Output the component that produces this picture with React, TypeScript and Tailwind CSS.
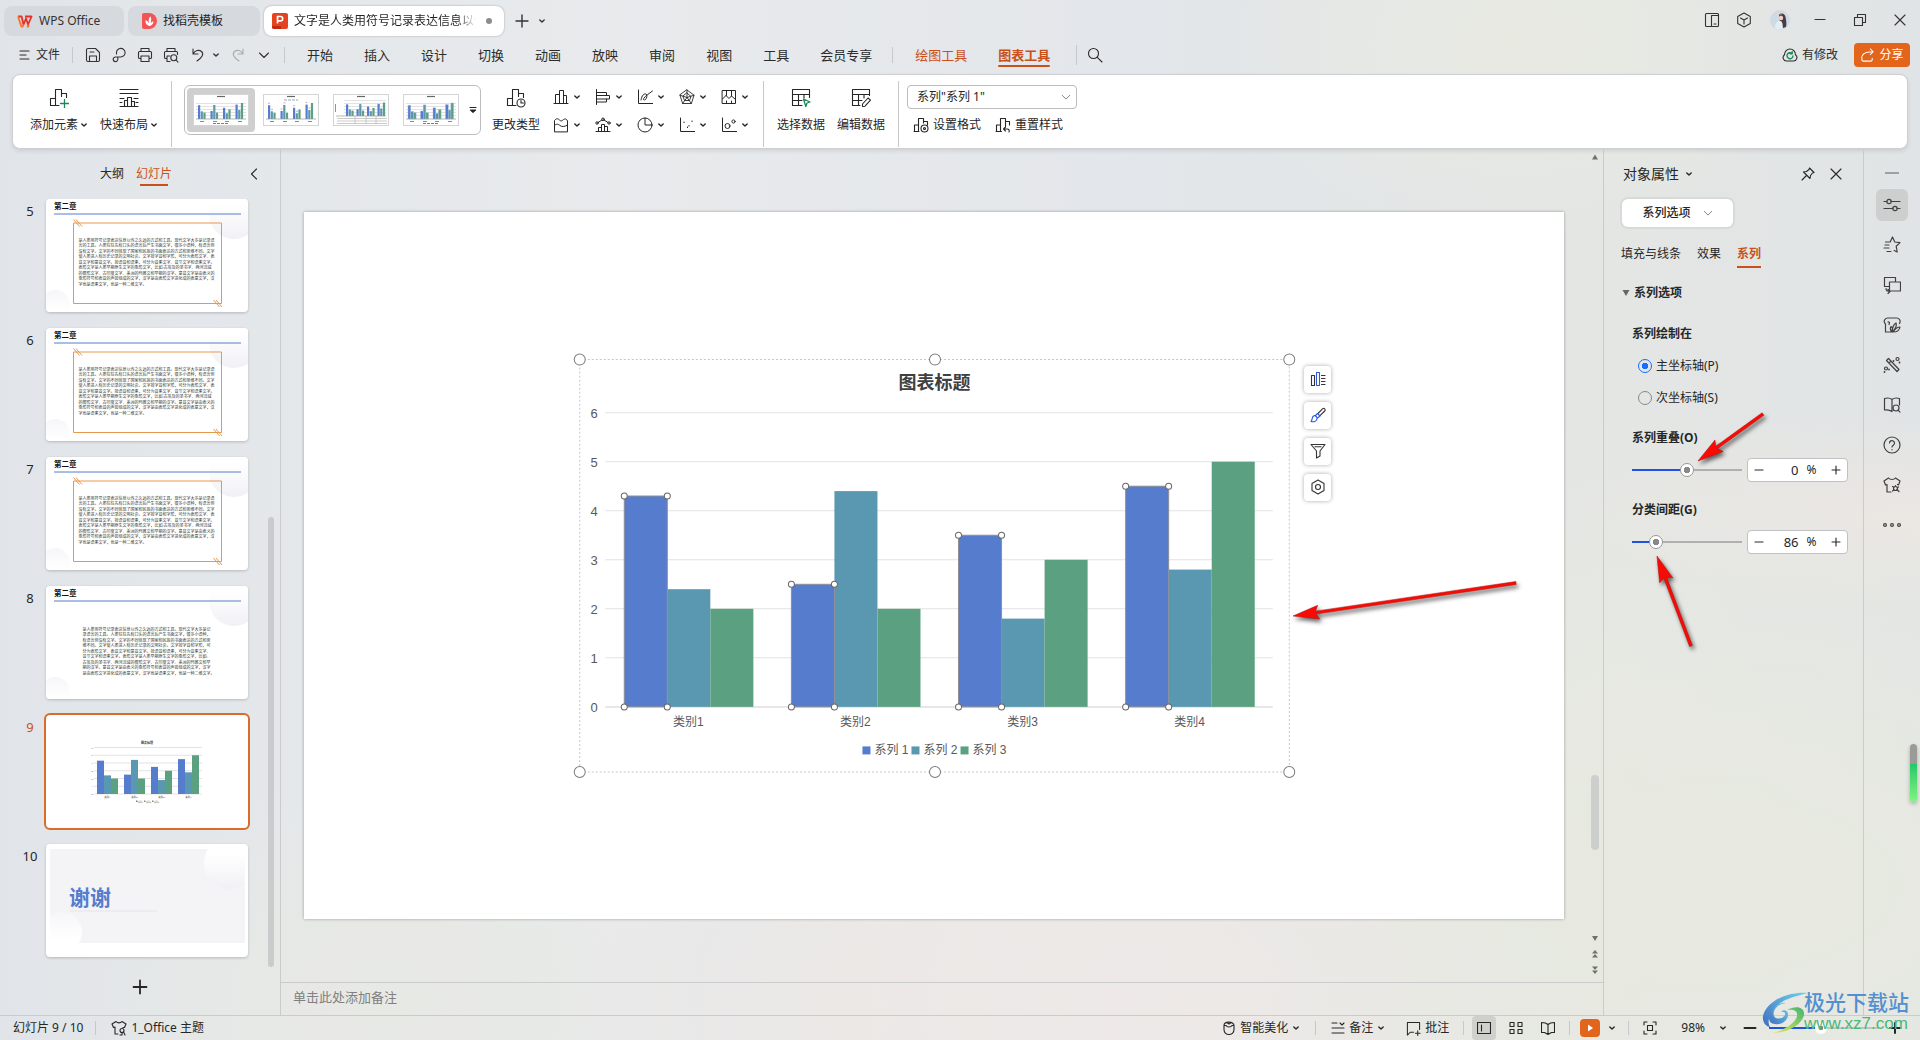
import React, { useState } from "react";

type IconProps = { size?: number; className?: string; children: React.ReactNode; sw?: number; box?: number };

function Icon({ size = 16, box, className = "", sw = 1.1, children }: IconProps) {
  const b = box ?? size;
  return (
    <svg width={size} height={size} viewBox={`0 0 ${b} ${b}`} fill="none" stroke="currentColor" strokeWidth={sw} strokeLinecap="round" strokeLinejoin="round" className={`shrink-0 ${className}`} aria-hidden="true">
      {children}
    </svg>
  );
}

const Caret = () => (
  <Icon size={8} sw={1.4}><path d="M1.800 3 4 5.100 6.200 3" /></Icon>
);

const Vee = ({ size = 12 }: { size?: number }) => (
  <Icon size={size} box={12} sw={1.1}><path d="M1.5 4 6 8.5 10.5 4" /></Icon>
);

const Divider = ({ className = "" }: { className?: string }) => <span className={`w-px shrink-0 bg-[#c6c8cb] ${className}`} />;

/* ---------- title bar ---------- */

function TitleBar() {
  return (
    <header className="flex h-10 shrink-0 items-start pt-1.5 pl-1">
      <button className="flex h-[30px] w-[120px] items-center gap-1.5 rounded-lg bg-[#d6d9dd] pl-[13px] text-xs text-[#333]">
        <svg width="16" height="13" viewBox="0 0 16 13" fill="none" stroke="#e8302a" strokeWidth="1.800" strokeLinejoin="round" aria-hidden="true">
          <path d="M1 1.500h3.600L6.500 9.500 9 3.500l2 6 3.600-8H8" />
          <path d="M1 1.500 4.400 11.500h1.400l.9-2M9.800 11.500h1.500l.5-1.500" stroke="#f5732b" />
        </svg>
        WPS Office
      </button>
      <button className="ml-1 flex h-[30px] w-[132px] items-center gap-1.5 rounded-lg bg-[#d6d9dd] pl-[13px] text-xs text-[#222]">
        <svg width="16" height="16" viewBox="0 0 16 16" aria-hidden="true">
          <path d="M1 2a2 2 0 0 1 2-2h5a7.500 7.500 0 0 1 0 16H3a2 2 0 0 1-2-2z" fill="#f25555" />
          <path d="M8.300 13C5 12 4.200 9.500 4.600 7.300 6.400 8 7.400 9 8 10.500 7.200 7.500 8 5 9.300 3.300c1.200 2 1.200 4.500.2 6.900.9-1 1.700-1.600 2.900-2C12.500 10.500 11 12.600 8.300 13z" fill="#fff" />
        </svg>
        找稻壳模板
      </button>
      <div className="ml-1 flex h-[30px] w-60 items-center rounded-lg bg-white pl-2 shadow-[0_0_2px_#9a9a9a]">
        <svg width="16" height="16" viewBox="0 0 16 16" aria-hidden="true">
          <rect width="16" height="16" rx="2" fill="#e5431f" />
          <path d="M0 13h9v3H2a2 2 0 0 1-2-2z" fill="#c42a12" />
          <path d="M5.500 10.500V3.500h3a2.200 2.200 0 0 1 0 4.400h-3" fill="none" stroke="#fff" strokeWidth="1.600" />
        </svg>
        <button className="ml-1.5 w-48 shrink-0 bg-gradient-to-r from-[#222] from-85% to-transparent to-95% bg-clip-text text-left text-xs whitespace-nowrap text-transparent">
          文字是人类用符号记录表达信息以传
        </button>
        <span className="size-1.5 rounded-full bg-[#8c8c8c]" />
      </div>
      <button aria-label="新建标签" className="ml-2.5 flex h-[30px] w-4 items-center justify-center text-[#333]">
        <Icon size={14} sw={1.400}><path d="M7 1v12M1 7h12" /></Icon>
      </button>
      <button aria-label="标签列表" className="ml-2 flex h-[30px] w-2 items-center justify-center text-[#333]"><Caret /></button>

      <div className="ml-auto flex h-[28px] items-center text-[#333]">
        <button aria-label="侧栏" className="flex w-8 justify-center">
          <Icon size={16}><rect x="1.500" y="1.500" width="13" height="13" rx="1" /><path d="M7.500 14.500v-11h7M10 12h2" /></Icon>
        </button>
        <button aria-label="应用" className="flex w-8 justify-center">
          <Icon size={16}><path d="M8 1 14.300 4.500v7L8 15 1.700 11.500v-7zM4.500 6 8 8l3.500-2M8 8v4" /></Icon>
        </button>
        <button aria-label="账号" className="flex w-10 justify-center">
          <svg width="20" height="20" viewBox="0 0 20 20" aria-hidden="true">
            <circle cx="10" cy="10" r="10" fill="#cfdae2" />
            <path d="M9 5c2-2.500 6-1.500 6.500 2 .5 3 1.500 6 .5 10l-3 1-3-6z" fill="#4a3a45" />
            <circle cx="11" cy="8" r="2.200" fill="#f0d3c8" />
            <path d="M5 18c0-5 2.500-7.500 5.500-7 2 .5 2.500 4 2 8a9 9 0 0 1-7.500-1z" fill="#e3eef4" />
            <path d="M9.500 5 12 4.500" stroke="#c0705a" />
          </svg>
        </button>
        <button aria-label="最小化" className="flex w-10 justify-center"><Icon size={12}><path d="M1 5.500h10" /></Icon></button>
        <button aria-label="还原" className="flex w-10 justify-center">
          <Icon size={14}><path d="M1.500 4.500h8v8h-8zM4.500 4.500v-3h8v8h-3" /></Icon>
        </button>
        <button aria-label="关闭" className="flex w-10 justify-center"><Icon size={12}><path d="M1 1l10 10M11 1 1 11" /></Icon></button>
      </div>
    </header>
  );
}

/* ---------- menu row ---------- */

const menuTabs = ["开始", "插入", "设计", "切换", "动画", "放映", "审阅", "视图", "工具", "会员专享"];

function MenuRow() {
  return (
    <div className="flex h-[34px] shrink-0 items-center pr-[10px] pb-1 pl-[18px] text-[#2b2b2b]">
      <button className="flex items-center gap-1.5 text-xs">
        <Icon size={12}><path d="M2 2h9M2 6h6M2 10h9" /></Icon>文件
      </button>
      <Divider className="ml-3 h-4" />
      <div className="ml-[7px] flex items-center text-[#333]">
        <button aria-label="保存" className="flex w-[26px] justify-center">
          <Icon><path d="M1.500 3a1.500 1.500 0 0 1 1.500-1.500h7.500l4 4V13a1.500 1.500 0 0 1-1.500 1.500H3A1.500 1.500 0 0 1 1.500 13zM4.500 14v-5h7v5M5 5h4" /></Icon>
        </button>
        <button aria-label="输出" className="flex w-[26px] justify-center">
          <Icon><path d="M5.500 7V5.800A4.300 4.300 0 1 1 9.800 10H4.500A2.300 2.300 0 1 0 6.800 12.300V10" /></Icon>
        </button>
        <button aria-label="打印" className="flex w-[26px] justify-center">
          <Icon><path d="M4 4.500v-3h8v3M4 11.500H2.500a1 1 0 0 1-1-1v-5a1 1 0 0 1 1-1h11a1 1 0 0 1 1 1v5a1 1 0 0 1-1 1H12M4 9h8v5.500H4z" /></Icon>
        </button>
        <button aria-label="打印预览" className="flex w-[26px] justify-center">
          <Icon><path d="M4 4.500v-3h8v3M3.500 11.500h-1a1 1 0 0 1-1-1v-5a1 1 0 0 1 1-1h11a1 1 0 0 1 1 1v2M4 14.500V9h3M4 14.500h3" /><circle cx="10.800" cy="10.800" r="3" /><path d="m13 13 2 2.200" /></Icon>
        </button>
        <button aria-label="撤销" className="flex w-[28px] justify-center">
          <Icon><path d="M3 2v5h5M3.200 6.800C5 3.500 9 2.300 11.500 4.500c2.600 2.500 1 5.500-4.500 9.500" /></Icon>
        </button>
        <button aria-label="撤销列表" className="flex w-2 justify-center"><Caret /></button>
        <button aria-label="恢复" className="flex w-9 justify-center text-[#a9abae]">
          <Icon><path d="M13 2v5H8M12.800 6.800C11 3.500 7 2.300 4.500 4.500c-2.600 2.500-1 5.500 4.500 9.500" /></Icon>
        </button>
        <button aria-label="更多" className="flex w-4 justify-center"><Vee size={12} /></button>
      </div>
      <Divider className="ml-3 h-4" />
      <nav className="ml-[22px] flex items-center gap-[31px] text-[13px] whitespace-nowrap">
        {menuTabs.map((t) => <button key={t}>{t}</button>)}
      </nav>
      <Divider className="ml-5 h-4" />
      <nav className="ml-[22px] flex items-center gap-[31px] text-[13px] whitespace-nowrap text-[#c9501a]">
        <button>绘图工具</button>
        <button className="relative font-bold">
          图表工具<span className="absolute inset-x-0 -bottom-1 h-0.5 rounded bg-[#c9501a]" />
        </button>
      </nav>
      <Divider className="ml-[26px] h-5" />
      <button aria-label="搜索" className="ml-2.5"><Icon><circle cx="6.500" cy="6.500" r="5" /><path d="M10.300 10.300 15 15" /></Icon></button>
      <button className="ml-auto flex items-center gap-1 text-xs">
        <Icon size={16}>
          <path d="M4.500 14a3.500 3.500 0 0 1-2-6.300C2.600 4.500 5 2 8 2s5.400 2.500 5.500 5.700a3.500 3.500 0 0 1-2 6.300z" />
          <path d="M10 6.500A3 3 0 1 0 11 9M10.200 4.800v2H8.200" stroke="#1a8a5a" strokeWidth="1.400" />
        </Icon>
        有修改
      </button>
      <button className="ml-4 flex h-6 w-14 items-center justify-center gap-1 rounded bg-[#e3651b] text-xs text-white">
        <Icon size={15} box={16}><path d="M2 9v3.500A1.500 1.500 0 0 0 3.500 14h8a1.500 1.500 0 0 0 1.500-1.500V11M2.500 8C4 5 8 4 14 4M11 1l3 3-3 3" /></Icon>
        分享
      </button>
    </div>
  );
}

/* ---------- ribbon ---------- */

const chartData = [
  [4.3, 2.4, 2],
  [2.5, 4.4, 2],
  [3.5, 1.8, 3],
  [4.5, 2.8, 5],
];
const seriesColors = ["#567ccd", "#5998b0", "#5ba181"];

function StyleThumb({ variant }: { variant: number }) {
  const base = variant === 2 ? 22 : 25;
  const left = variant === 2 ? 12 : 4;
  const unit = variant === 2 ? 2.7 : 3.2;
  const pitch = variant === 2 ? 10.5 : 12.5;
  return (
    <svg width="56" height="32" viewBox="0 0 56 32" aria-hidden="true">
      <rect x="0.500" y="0.500" width="55" height="31" fill="#fff" stroke="#d5d5d5" />
      <path d="M24 2.500h8" stroke="#666" strokeWidth="1.200" />
      {variant !== 1 && [0, 1, 2, 3, 4].map((i) => <path key={i} d={`M${left - 1} ${base - 3 * i - 3.500}H53`} stroke="#e2e2e2" />)}
      {variant === 1 && <path d="M21 6h14" stroke="#9aa6b8" strokeDasharray="3 1" />}
      {variant === 2 && <path d="M4 24.500H54M4 27H54M4 29.500H54M22 22v8M33 22v8M43 22v8" stroke="#bdbdbd" strokeWidth="0.800" />}
      {variant === 2 && <path d="M2.500 10v8" stroke="#b08a6a" />}
      {chartData.map((g, i) =>
        g.map((v, j) => (
          <rect key={`${i}-${j}`} x={left + 1 + i * pitch + j * 2.7} y={base - v * unit} width={variant === 3 ? 2.7 : 2.2} height={v * unit} fill={seriesColors[j]} stroke={variant === 3 ? "#a9bfe0" : "none"} strokeWidth="0.400" />
        )),
      )}
      {variant === 1 && chartData.map((g, i) => <path key={i} d={`M${5 + i * 12.5} ${base - g[0] * unit - 2}h2M${8 + i * 12.5} ${base - g[1] * unit - 2}h2`} stroke="#e3a5a0" />)}
      <path d={`M3 ${base}H53`} stroke="#9a9a9a" strokeWidth="0.700" />
      {variant !== 2 && <path d="M7 27.500h4M20 27.500h4M32 27.500h4M45 27.500h4" stroke="#a08080" />}
      {(variant === 0 || variant === 3) && <path d="M20 29.500h16" stroke="#6a7fa8" strokeDasharray="3 1" />}
    </svg>
  );
}

const chartTypes: { name: string; art: React.ReactNode }[] = [
  { name: "柱形图", art: <path d="M1 14.500h14M2.500 14.500v-9h4v9M6.500 14.500V1.500h4v13M10.500 6.500h3v8" /> },
  { name: "条形图", art: <path d="M1.500 .5v15M1.500 3.500h10v3M1.500 6.500h13v3.500h-13M1.500 13h10v-3" /> },
  { name: "折线图", art: <path d="M1.500 1v13.500H16M4 11c1-5 3-6.500 5-6 1.500.5 1 4-.5 5.500-1 1-3 .5-1.500-1.500C9 6.500 11.500 5 15.500 2" /> },
  { name: "雷达图", art: <path d="M8 1 15 6.200 12.400 14.500H3.600L1 6.200zM8 1v7.500M1 6.200l7 2.300 7-2.300M3.600 14.500 8 8.500l4.400 6M8 4l4 3.500-1.500 4h-5L4 7.500z" strokeWidth="0.900" /> },
  { name: "地图", art: <path d="M1.500 1.500h13v13h-13zM1.500 10 5 6.500l3 3 2.500-2.500 4 3.500M5.500 1.500v5M10.500 1.500V7M5.500 12v2.500M10.500 12v2.500" /> },
  { name: "面积图", art: <path d="M1.500 14.500v-11C4 .5 5.500 2 7 3.500c2 1.500 3.500-2 5.500-1.500l2 1.500v11zM1.500 8.500c2-2 3.500-1.500 5.500 0s4 1.500 7.500-.5" /> },
  { name: "组合图", art: <><path d="M1 14.500h14M3.500 14.500v-4h3v4M6.500 14.500V7.500h3v7M9.500 9.500h3v5M3 5.500 7 3M9 3l4 2.500" /><circle cx="2" cy="6" r="1.200" /><circle cx="8" cy="2.300" r="1.300" /><circle cx="14" cy="6" r="1.200" /></> },
  { name: "饼图", art: <><circle cx="8" cy="8" r="7" /><path d="M8 1v7h7" /></> },
  { name: "散点图", art: <path d="M1.500 1v13.500H16M5 5v.6M8.500 10v.6M10 8.500v.6M13 4v.6" /> },
  { name: "气泡图", art: <><path d="M1.500 1v13.500H16" /><circle cx="6.500" cy="9" r="2.500" /><circle cx="12.500" cy="4.500" r="1.600" /></> },
];

const columnOutline = "M1.500 17.500v-7h5v7M6.500 17.500v-16h6v7M12.500 5.500h5v4M1.500 17.500H10";

function BigButton({ label, caret, children }: { label: string; caret?: boolean; children: React.ReactNode }) {
  return (
    <button className="flex flex-col items-center gap-[9px] pt-[3px] text-xs whitespace-nowrap">
      <Icon size={20}>{children}</Icon>
      <span className="flex items-center gap-0.5">{label}{caret && <Caret />}</span>
    </button>
  );
}

function Ribbon() {
  return (
    <section className="mx-[12px] flex h-[75px] shrink-0 items-start rounded-lg border border-[#cdcfd2] bg-white pt-2.5 pl-[17px] text-[#262626] shadow-[0_2px_4px_#0000001a]">
      <div className="flex gap-3">
        <BigButton label="添加元素" caret><path d={columnOutline} /><path d="M15.500 11.500v8M11.500 15.500h8" stroke="#1a8a5a" strokeWidth="1.300" /></BigButton>
        <BigButton label="快速布局" caret><path d="M1 1.500h18M1 5.500h18M1 10.500h4M15 10.500h4M1 18.500h18M5.500 18.500v-6h3v6M8.500 18.500V9.500h4v9M12.500 13.500h3v5M1 14.500h2M17 14.500h2" /></BigButton>
      </div>
      <Divider className="-mt-1 ml-[13px] h-[66px]" />
      <div className="ml-3 flex h-[50px] w-[297px] items-center gap-0.5 rounded-md border border-[#bdbdbd] pl-0.5">
        {[0, 1, 2, 3].map((v) => (
          <button key={v} aria-label={`样式 ${v + 1}`} className={v === 0 ? "flex h-11 w-[68px] items-center justify-center rounded bg-[#cfcfcf]" : "flex h-11 w-[68px] items-center justify-center"}>
            <StyleThumb variant={v} />
          </button>
        ))}
        <button aria-label="更多样式" className="ml-0.5"><Icon size={8} sw={1.200}><path d="M1 1.500h6M1.500 4 4 6.300 6.500 4z" fill="currentColor" /></Icon></button>
      </div>
      <div className="ml-[11px]">
        <BigButton label="更改类型"><path d={columnOutline} /><circle cx="15" cy="15" r="4" /><path d="M15 12.500V15h2.500" /></BigButton>
      </div>
      <div className="ml-[13px] grid grid-cols-5 gap-x-3.5 gap-y-3 pt-1">
        {chartTypes.map((c) => (
          <button key={c.name} aria-label={c.name} className="flex items-center gap-1"><Icon sw={1}>{c.art}</Icon><Caret /></button>
        ))}
      </div>
      <Divider className="-mt-1 ml-[14px] h-[66px]" />
      <div className="ml-[13px] flex gap-3">
        <BigButton label="选择数据"><path d="M11 17.500H1.500v-16h17v8M1.500 6.500h17M1.500 12.500H11M7.500 6.500v11M13 6.500V10" /><path d="m12.500 11 6.500 3-3 1-1.200 3.500z" stroke="#1a8a5a" strokeWidth="1.300" /></BigButton>
        <BigButton label="编辑数据"><path d="M9 17.500H1.500v-16h17v6M1.500 6.500h17M1.500 12.500H11M7.500 6.500v11M13 6.500V10M11.500 18.500v-2.500l5.500-6 2.500 2.200-5.500 6z" /></BigButton>
      </div>
      <Divider className="-mt-1 ml-[13px] h-[66px]" />
      <div className="ml-2 flex flex-col gap-2">
        <div className="relative">
          <select aria-label="图表元素" className="h-6 w-[170px] appearance-none rounded border border-[#bdbdbd] bg-white pl-[9px] text-xs" defaultValue="s1">
            <option value="s1">系列"系列 1"</option>
          </select>
          <span className="pointer-events-none absolute top-[7px] right-1.5 text-[#777]"><Vee size={10} /></span>
        </div>
        <div className="flex gap-3.5 pl-1.5 text-xs">
          <button className="flex items-center gap-1">
            <Icon><path d="M1 14.500h5M1.500 14.500V8h4v6.500M5.500 8V1.500h5V6M10.500 4.500h4V8" /><circle cx="11.500" cy="11.500" r="3.500" /><circle cx="11.500" cy="11.500" r="1" /></Icon>设置格式
          </button>
          <button className="flex items-center gap-1">
            <Icon><path d="M1 14.500h5.500M1.500 14.500V8h4v6.500M5.500 8V1.500h5V9M10.500 4.500h4V8M8.500 12l2-2M8.500 12l2 2M8.500 12H12a2 2 0 0 1 2 3" /></Icon>重置样式
          </button>
        </div>
      </div>
    </section>
  );
}

/* ---------- slide list ---------- */

const framedText = [
  "是人类用符号记录表达信息以传之久远的方式和工具。现代文字大多是记录语",
  "言的工具。人类往往先有口头的语言后产生书面文字，很多小语种，有语言但",
  "没有文字。文字的不同体现了国家和民族的书面表达的方式和思维不同。文字",
  "使人类进入有历史记录的文明社会。文字按字音和字形，可分为表形文字、表",
  "音文字和意音文字。按语音和语素，可分为音素文字、音节文字和语素文字。",
  "表形文字是人类早期原生文字的象形文字，比如:古埃及的圣书字、两河流域",
  "的楔形文字、古印度文字、美洲的玛雅文和早期的汉字。意音文字是由表义的",
  "象形符号和表音的声旁组成的文字，汉字是由表形文字进化成的表意文字，汉",
  "字也是语素文字，也是一种二维文字。",
];
const plainText = [
  "是人类用符号记录表达信息以传之久远的方式和工具。现代文字大多是记",
  "录语言的工具。人类往往先有口头的语言后产生书面文字，很多小语种，",
  "有语言但没有文字。文字的不同体现了国家和民族的书面表达的方式和思",
  "维不同。文字使人类进入有历史记录的文明社会。文字按字音和字形，可",
  "分为表形文字、表音文字和意音文字。按语音和语素，可分为音素文字、",
  "音节文字和语素文字。表形文字是人类早期原生文字的象形文字，比如:",
  "古埃及的圣书字、两河流域的楔形文字、古印度文字、美洲的玛雅文和早",
  "期的汉字。意音文字是由表义的象形符号和表音的声旁组成的文字，汉字",
  "是由表形文字进化成的表意文字，汉字也是语素文字，也是一种二维文字。",
];

const thumbClass = "block h-auto w-full";

function TextSlide({ framed }: { framed: boolean }) {
  const lines = framed ? framedText : plainText;
  return (
    <svg viewBox="0 0 404 226" className={thumbClass} aria-hidden="true">
      <circle cx="376" cy="30" r="50" fill="url(#orb)" />
      <circle cx="18" cy="212" r="30" fill="url(#orbFlip)" />
      <text x="16" y="19" fontSize="15" fontWeight="700" fill="#111">第二章</text>
      <path d="M16 30H390" stroke="#567ccd" strokeWidth="2" />
      {framed && <path d="M55 48H351V209H55zM55 41l12 14M60 41l12 14M335 202l12 14M340 202l12 14" fill="none" stroke="#e8984d" strokeWidth="2" />}
      {lines.map((l, i) => <text key={i} x={framed ? 65 : 73} y={(framed ? 85 : 89) + i * 11} fontSize="8" fill="#333">{l}</text>)}
    </svg>
  );
}

function ChartSlide() {
  return (
    <svg viewBox="0 0 404 226" className={thumbClass} aria-hidden="true">
      <text x="202" y="58" fontSize="6" fontWeight="700" textAnchor="middle" fill="#333">图表标题</text>
      {[0, 1, 2, 3, 4, 5, 6].map((i) => (
        <g key={i}>
          <path d={`M96 ${158 - i * 15.5}H312`} stroke="#e2e2e2" strokeWidth="2" />
          <text x="91" y={160 - i * 15.5} fontSize="5" fill="#555">{i}</text>
        </g>
      ))}
      {chartData.map((g, i) => (
        <g key={i}>
          {g.map((v, j) => <rect key={j} x={102 + i * 54 + j * 14} y={158 - v * 15.5} width="14" height={v * 15.5} fill={seriesColors[j]} />)}
          <text x={123 + i * 54} y="166" fontSize="5" textAnchor="middle" fill="#444">类别{i + 1}</text>
        </g>
      ))}
      {[1, 2, 3].map((n, i) => (
        <g key={n}>
          <rect x={180 + i * 16} y="171" width="3" height="3" fill={seriesColors[i]} />
          <text x={184 + i * 16} y="175" fontSize="4" fill="#555">系列{n}</text>
        </g>
      ))}
    </svg>
  );
}

function ThanksSlide() {
  return (
    <svg viewBox="0 0 404 226" className={thumbClass} aria-hidden="true">
      <clipPath id="thanks"><rect x="8" y="10" width="390" height="188" /></clipPath>
      <g clipPath="url(#thanks)">
        <rect x="8" y="10" width="390" height="188" fill="#f4f4f7" />
        <circle cx="368" cy="38" r="52" fill="url(#orb)" />
        <circle cx="32" cy="176" r="40" fill="url(#orbFlip)" />
        <path d="M48 134H222" stroke="#e6e6ea" strokeWidth="2" />
      </g>
      <text x="46" y="121" fontSize="42" fontWeight="700" fill="#567ccd">谢谢</text>
    </svg>
  );
}

function SlideList() {
  const slides = [
    { n: 5, art: <TextSlide framed /> },
    { n: 6, art: <TextSlide framed /> },
    { n: 7, art: <TextSlide framed /> },
    { n: 8, art: <TextSlide framed={false} /> },
    { n: 9, art: <ChartSlide /> },
    { n: 10, art: <ThanksSlide /> },
  ];
  return (
    <aside className="flex w-[281px] shrink-0 flex-col border-r border-[#c9cbcd]">
      <div className="flex h-[50px] shrink-0 items-center pr-5 pl-[100px] text-xs text-[#262626]">
        <button>大纲</button>
        <button className="relative ml-3 text-[#c9501a]">幻灯片<span className="absolute inset-x-1 -bottom-1 h-0.5 bg-[#c9501a]" /></button>
        <button aria-label="收起" className="ml-auto"><Icon size={12}><path d="M8.500 1 3.500 6l5 5" /></Icon></button>
      </div>
      <div className="flex min-h-0 flex-1 overflow-hidden">
        <div className="w-[250px] shrink-0">
          <ol className="flex flex-col gap-4">
            {slides.map((s) => (
              <li key={s.n} className="flex">
                <span className={s.n === 9 ? "w-[46px] pt-1 pl-3.5 text-center text-[13px] leading-4 text-[#c9501a]" : "w-[46px] pt-1 pl-3.5 text-center text-[13px] leading-4 text-[#262626]"}>{s.n}</span>
                <button aria-label={`幻灯片 ${s.n}`} className={s.n === 9 ? "w-[202px] overflow-hidden rounded-sm bg-white outline-2 outline-[#d96b2b]" : "w-[202px] overflow-hidden rounded-sm bg-white shadow-[0_1px_3px_#00000033]"}>
                  {s.art}
                </button>
              </li>
            ))}
          </ol>
          <button aria-label="新建幻灯片" className="mt-[22px] ml-[132px] block text-[#262626]"><Icon size={16} sw={1.800}><path d="M8 1.500v13M1.500 8h13" /></Icon></button>
        </div>
        <div className="ml-[18px] flex w-1.5 flex-col pb-12">
          <span className="h-[318px] shrink-0" />
          <span className="flex-1 rounded-full bg-[#c9cbcd]" />
        </div>
      </div>
    </aside>
  );
}

/* ---------- canvas ---------- */

const axisY = (v: number) => 707.5 - v * 49;
const cjkSans = "'Liberation Sans','Noto Sans CJK SC',sans-serif";

function Chart() {
  const handles = [579.5, 934.5, 1288.5];
  return (
    <svg viewBox="304 213 1259 707" className="block h-full w-full" role="img" aria-label="图表标题">
      <rect x="579.500" y="360.500" width="709" height="412" fill="none" stroke="#c4c6cc" strokeDasharray="2 2" />
      <text x="934" y="390" fontSize="18" fontWeight="700" fill="#404040" textAnchor="middle">图表标题</text>
      {[0, 1, 2, 3, 4, 5, 6].map((v) => (
        <g key={v}>
          <path d={`M605 ${axisY(v)}H1272`} stroke={v === 0 ? "#d0d0d0" : "#e2e2e2"} />
          <text x="594" y={axisY(v) + 5} fontSize="13" fill="#595959" textAnchor="middle" fontFamily={cjkSans}>{v}</text>
        </g>
      ))}
      {chartData.map((g, i) => {
        const x = 624 + i * 167;
        return (
          <g key={i}>
            {g.map((v, j) => <rect key={j} x={x + j * 43} y={axisY(v)} width="43" height={v * 49} fill={seriesColors[j]} />)}
            <text x={x + 64} y="727" fontSize="12" fill="#595959" textAnchor="middle" fontFamily={cjkSans}>类别{i + 1}</text>
          </g>
        );
      })}
      {chartData.map((g, i) => {
        const x = 624 + i * 167;
        const top = axisY(g[0]);
        return (
          <g key={i} stroke="#8d8f96">
            <rect x={x} y={top} width="43" height={707.5 - top} fill="none" />
            {[[x, top], [x + 43, top], [x, 707.5], [x + 43, 707.5]].map(([cx, cy]) => <circle key={`${cx}-${cy}`} cx={cx} cy={cy} r="3" fill="#fff" stroke="#666" />)}
          </g>
        );
      })}
      {[1, 2, 3].map((n, i) => (
        <g key={n}>
          <rect x={862 + i * 49} y="747" width="8" height="8" fill={seriesColors[i]} />
          <text x={874 + i * 49} y="755" fontSize="12" fill="#595959" fontFamily={cjkSans}>系列 {n}</text>
        </g>
      ))}
      {handles.map((x) => [360.5, 772.5].map((y) => <circle key={`${x}-${y}`} cx={x} cy={y} r="5.500" fill="#fff" stroke="#7a7a7a" />))}
    </svg>
  );
}

const floatTools = [
  { name: "图表元素", art: <><path d="M1.500 4.500h3v10h-3zM11.500 4.500h3.500M11.500 7.500h3.500M11.500 10.500h3.500M11.500 13.500h3.500" /><path d="M6.500 1.500h3v13h-3z" stroke="#2b59e0" /></> },
  { name: "图表样式", art: <><path d="M8 6.500 12.500 1.800a1.500 1.500 0 0 1 2.200 2.200L10 8.700" /><path d="M1 14.500c1.500-1 .5-4 2.500-5.500 1.500-1 4 .5 3.500 3s-3.500 3-6 2.500zM5.500 8.500 7.500 6.500 10 9l-2.500 2" stroke="#2b59e0" /></> },
  { name: "图表筛选", art: <path d="M1 1.500h14L10 8v5l-3.500 2V8zM5 3.800h6" /> },
  { name: "设置", art: <><path d="M8 1 14 4.500v7L8 15 2 11.500v-7z" /><circle cx="8" cy="8" r="2.500" /></> },
];

function Canvas() {
  return (
    <main className="flex min-w-0 flex-1 flex-col">
      <div className="flex min-h-0 flex-1">
        <div className="flex min-w-0 flex-1 items-center pr-[26px] pl-[23px]">
          <div className="relative aspect-[1259/707] w-full bg-white shadow-[0_0_3px_#00000055]">
            <Chart />
            <div className="absolute top-[21.800%] left-[79.400%] flex flex-col gap-[9px] text-[#333]">
              {floatTools.map((t) => (
                <button key={t.name} aria-label={t.name} className="flex h-[27px] w-[27px] items-center justify-center rounded bg-white shadow-[0_0_4px_#00000055]">
                  <Icon>{t.art}</Icon>
                </button>
              ))}
            </div>
          </div>
        </div>
        <div className="flex w-[13px] shrink-0 flex-col items-center pt-1 pr-1 text-[#6e7072]">
          <button aria-label="向上滚动"><Icon size={8} sw={0}><path d="M4 1.500 7 6.500H1z" fill="currentColor" /></Icon></button>
          <span className="flex-[614_1_0%]" />
          <span className="w-2 flex-[75_1_0%] rounded-full bg-[#cdcfcd]" />
          <span className="flex-[84_1_0%]" />
          <div className="flex flex-col gap-2 pb-2">
            <button aria-label="向下滚动"><Icon size={8} sw={0}><path d="M4 7 7 2H1z" fill="currentColor" /></Icon></button>
            <button aria-label="上一张"><Icon size={8} sw={0}><path d="M4 0 7 3.500H1zM4 4 7 7.500H1z" fill="currentColor" /></Icon></button>
            <button aria-label="下一张"><Icon size={8} sw={0}><path d="M4 8 7 4.500H1zM4 4 7 .5H1z" fill="currentColor" /></Icon></button>
          </div>
        </div>
      </div>
      <div className="h-[33px] shrink-0 border-t border-[#c9cbcd]">
        <input aria-label="备注" placeholder="单击此处添加备注" className="w-full bg-transparent pt-1 pl-3 text-[13px] leading-5 outline-none placeholder:text-[#808080]" />
      </div>
    </main>
  );
}

/* ---------- property panel ---------- */

const thumbStyles =
  "appearance-none [&::-webkit-slider-thumb]:size-3.5 [&::-webkit-slider-thumb]:appearance-none [&::-webkit-slider-thumb]:rounded-full [&::-webkit-slider-thumb]:border [&::-webkit-slider-thumb]:border-[#999] [&::-webkit-slider-thumb]:bg-[radial-gradient(circle,#888_0_3px,#fff_3.500px)]";

function SliderField({ label, initial, min, max }: { label: string; initial: number; min: number; max: number }) {
  const [value, setValue] = useState(initial);
  const pct = ((value - min) / (max - min)) * 100;
  return (
    <div className="pl-7">
      <label className="block text-xs leading-4 font-bold">
        {label}
        <span className="mt-3 flex items-center">
          <input
            type="range" min={min} max={max} value={value} onChange={(e) => setValue(Number(e.target.value))}
            className={`h-0.5 w-[110px] ${thumbStyles}`}
            style={{ background: `linear-gradient(to right, #2250e0 ${pct}%, #b0b0b0 ${pct}%)` }}
          />
          <span className="ml-[5px] flex h-6 w-[101px] items-center justify-between rounded-sm border border-[#bfc1c3] bg-white px-1.5 font-normal">
            <button aria-label="减少" onClick={() => setValue(Math.max(min, value - 1))}><Icon size={10}><path d="M1 5h8" /></Icon></button>
            <span className="flex items-center pr-2.5">
              <input aria-label={`${label}数值`} value={value} onChange={(e) => setValue(Number(e.target.value) || 0)} className="w-8 bg-transparent text-right text-[13px] outline-none" />
              <span className="ml-2 w-3">%</span>
            </span>
            <button aria-label="增加" onClick={() => setValue(Math.min(max, value + 1))}><Icon size={10}><path d="M1 5h8M5 1v8" /></Icon></button>
          </span>
        </span>
      </label>
    </div>
  );
}

function Radio({ label, checked }: { label: string; checked?: boolean }) {
  return (
    <label className="flex items-center gap-1 text-xs leading-4">
      <input type="radio" name="axis" defaultChecked={checked} className="size-3.5 appearance-none rounded-full border border-[#888] checked:border-[#1a6dff] checked:bg-[radial-gradient(circle,#1a6dff_0_3px,transparent_3.500px)]" />
      {label}
    </label>
  );
}

function Panel() {
  return (
    <aside className="w-[261px] shrink-0 border-x border-[#c9cbcd] text-[#262626]">
      <div className="flex h-[50px] items-center pr-[21px] pl-[19px]">
        <button className="flex items-center gap-1.5 text-sm">对象属性<Caret /></button>
        <button aria-label="固定" className="ml-auto">
          <Icon size={14}><path d="m8.500 1 4.500 4.500-1.500.5L9.500 8.500l-.5 3L2.500 5l3-.5L8 2.500zM5.500 8.500 1 13" /></Icon>
        </button>
        <button aria-label="关闭面板" className="ml-[15px]"><Icon size={12}><path d="M1 1l10 10M11 1 1 11" /></Icon></button>
      </div>
      <button className="ml-[18px] flex h-[28px] w-[111px] items-center justify-center gap-3 rounded-md bg-white text-xs font-medium shadow-[0_0_0_2px_#d8dad8]">
        系列选项<span className="text-[#777]"><Vee size={10} /></span>
      </button>
      <div className="mt-[19px] flex gap-4 pl-[17px] text-xs leading-4">
        <button>填充与线条</button>
        <button>效果</button>
        <button className="relative font-bold text-[#c9501a]">系列<span className="absolute inset-x-0 -bottom-1.5 h-0.5 bg-[#c9501a]" /></button>
      </div>
      <button className="mt-[23px] flex items-center gap-1 pl-[18px] text-xs leading-4 font-bold">
        <Icon size={8} sw={0} className="text-[#666]"><path d="M.5 1h7L4 7z" fill="currentColor" /></Icon>
        系列选项
      </button>
      <h3 className="mt-[25px] pl-7 text-xs leading-4 font-bold">系列绘制在</h3>
      <div className="mt-4 flex flex-col gap-4 pl-[34px]">
        <Radio label="主坐标轴(P)" checked />
        <Radio label="次坐标轴(S)" />
      </div>
      <div className="mt-6 flex flex-col gap-5">
        <SliderField label="系列重叠(O)" initial={0} min={-100} max={100} />
        <SliderField label="分类间距(G)" initial={86} min={0} max={500} />
      </div>
    </aside>
  );
}

const railTools = [
  { name: "属性", art: <><path d="M1 5.500h3M8 5.500h9M1 12.500h9M14 12.500h3" /><circle cx="6" cy="5.500" r="2.200" /><circle cx="12" cy="12.500" r="2.200" /></> },
  { name: "动画", art: <path d="M9.500 1 11.800 6l5.200.6-3.800 3.700 1 5.700-3-1.500M9.500 1 7.200 6H2.500M2 9h4M1 12h5M4 15.500h4" /> },
  { name: "切换", art: <path d="M6.500 10.500h-5v-9h11V6M6.500 6h11v9h-11zM3 12.500c0 2 1 3 4 3M5 13.500l2 2-2 2" /> },
  { name: "素材", art: <path d="M8 16H2.500V8C0 6 1.500 2 4.500 2h9c3 0 4.500 3 3 5.500M6 8.500c1-2 0-3-1-2.500M9 16c-2-2-2-4-1-5.500 1.500 1 2 3 1 5.500zM9 16c0-4 2-8 4-9 1 3-1 7-4 9zM10 16c2-3 4-5 7-5-.5 3-3 5-7 5z" /> },
  { name: "美化", art: <><path d="M3.500 4.500 5.500 2.500 16 13.500 14 15.500zM6 7l2-2" /><circle cx="14.500" cy="3" r="1.500" /><circle cx="3" cy="12.500" r="1.500" /><path d="M10.500 5v.1M6 13.500v.1M16.500 6.500v.1M1.500 16v.1" strokeWidth="1.800" /></> },
  { name: "阅读", art: <><path d="M9 3.500v12M9 3.500C7 1.800 4 1.800 1.500 2.500V14c3-.5 5.500 0 7.500 1.500M9 3.500c2-1.700 5-1.700 7.500-1V9" /><circle cx="13" cy="12" r="3" /><path d="m15 14.200 2 2" /></> },
  { name: "帮助", art: <><circle cx="9" cy="9" r="8" /><path d="M6.500 7a2.500 2.500 0 1 1 3.800 2.200C9.300 9.800 9 10.200 9 11M9 13.500v.3" /></> },
  { name: "皮肤", art: <><path d="M8 16H4V8.500l-1.500.5L1 5l4.500-3c1.500 2 5.500 2 7 0L17 5l-1.500 4-1-.5" /><circle cx="12.500" cy="12.500" r="2" /><path d="M9.500 10.500l1.500.800M14 13.500l2 2M12.500 9.500v1M15.500 11l-1.200.6M9.500 15l1.500-1" /></> },
  { name: "更多", art: <><circle cx="2" cy="9" r="1.400" /><circle cx="9" cy="9" r="1.400" /><circle cx="16" cy="9" r="1.400" /></> },
];

function Rail() {
  return (
    <nav className="flex w-14 shrink-0 flex-col items-center text-[#404040]">
      <button aria-label="收起侧栏" className="flex h-10 w-8 items-center justify-center pt-2 text-[#888]"><Icon size={14} sw={1.600}><path d="M.5 7h13" /></Icon></button>
      <div className="flex flex-col gap-2">
        {railTools.map((t, i) => (
          <button key={t.name} aria-label={t.name} className={i === 0 ? "flex size-8 items-center justify-center rounded-md bg-[#cdcfcf]" : "flex size-8 items-center justify-center"}>
            <Icon size={18} sw={1.200}>{t.art}</Icon>
          </button>
        ))}
      </div>
    </nav>
  );
}

/* ---------- status bar ---------- */

function StatusBar() {
  return (
    <footer className="flex h-[25px] shrink-0 items-center border-t border-[#c9cbcd] pl-[13px] text-xs whitespace-nowrap text-[#262626]">
      <span>幻灯片 9 / 10</span>
      <Divider className="ml-3 h-3.5" />
      <button className="ml-[15px] flex items-center gap-1">
        <Icon size={16}><path d="M7 14H4V7l-1.500.5L1 4l4-2.500c1.500 1.800 4.500 1.800 6 0L15 4l-1.500 3.500H12" /><circle cx="11" cy="10.500" r="2" /><path d="M11 12.500v2.500M9 15h2M12.500 12l1.500 3" /></Icon>
        1_Office 主题
      </button>
      <div className="ml-auto flex h-full items-center">
        <button className="flex items-center gap-1"><Icon size={14}><path d="M2 4.500C2 0 12 0 12 4.500M2 4.500h2c1 2 5 2 6 0h2v4c0 3-2 5-5 5s-5-2-5-5zM4.500 1.500 7 3l2.500-1.500" /></Icon>智能美化<Caret /></button>
        <Divider className="ml-[15px] h-3.5" />
        <button className="ml-[15px] flex items-center gap-1"><Icon size={14}><path d="M1 2h5M1 7h12M1 12h12M9 2l2 2 2-2" /></Icon>备注<Caret /></button>
        <button className="ml-[21px] flex items-center gap-1"><Icon size={15} box={16}><path d="M8 12H4.500L1.500 15V1.500h13V9M12.500 10.500v5M10 13h5" /></Icon>批注</button>
        <Divider className="ml-3.5 h-3.5" />
        <button aria-label="普通视图" className="ml-2 flex h-full w-6 items-center justify-center rounded bg-[#cfd0cc]"><Icon size={14}><path d="M.5 1.500h13v11H.5zM4.500 4v6" /></Icon></button>
        <button aria-label="幻灯片浏览" className="ml-[13px]"><Icon size={14}><path d="M1 1.500h4v4H1zM9 1.500h4v4H9zM1 8.500h4v4H1zM9 8.500h4v4H9z" /></Icon></button>
        <button aria-label="阅读视图" className="ml-[18px]"><Icon size={14}><path d="M7 3.500v10M7 3.500C5.500 2 3 1.500.5 1.500v10h3L7 13.500l3.500-2h3v-10C11 1.500 8.500 2 7 3.500z" /></Icon></button>
        <Divider className="ml-3.5 h-3.5" />
        <button aria-label="放映" className="ml-2.5 flex h-[18px] w-5 items-center justify-center rounded-sm bg-[#e3651b] text-white"><Icon size={10} sw={0}><path d="M3 1.500 8 5 3 8.500z" fill="currentColor" /></Icon></button>
        <button aria-label="放映选项" className="ml-2 flex"><Caret /></button>
        <Divider className="ml-3 h-3.5" />
        <button aria-label="适应窗口" className="ml-3.5"><Icon size={14}><path d="M1 4V1h3M10 1h3v3M13 10v3h-3M4 13H1v-3M4.500 4.500h5v5h-5z" /></Icon></button>
        <span className="ml-6">98%</span>
        <button aria-label="缩放比例" className="ml-3.5 flex"><Caret /></button>
        <button aria-label="缩小" className="ml-4"><Icon size={14} sw={2}><path d="M1.500 7h11" /></Icon></button>
        <input
          aria-label="缩放" type="range" defaultValue={47}
          className="ml-3 h-0.5 w-[110px] appearance-none bg-[linear-gradient(to_right,#2250e0_47%,#c2c4c2_47%)] [&::-webkit-slider-thumb]:size-3 [&::-webkit-slider-thumb]:appearance-none [&::-webkit-slider-thumb]:rounded-full [&::-webkit-slider-thumb]:bg-[radial-gradient(circle,#888_0_2px,#fff_2.500px)]"
        />
        <button aria-label="放大" className="mr-[19px] ml-2.5"><Icon size={12} sw={2}><path d="M1 6h10M6 1v10" /></Icon></button>
      </div>
    </footer>
  );
}

/* ---------- overlays ---------- */

function Arrow({ from, to }: { from: [number, number]; to: [number, number] }) {
  const dx = to[0] - from[0];
  const dy = to[1] - from[1];
  const len = Math.hypot(dx, dy);
  const deg = (Math.atan2(dy, dx) * 180) / Math.PI;
  return (
    <g style={{ filter: "drop-shadow(2px 3px 2px #00000099)" }}>
      <path transform={`translate(${from[0]} ${from[1]}) rotate(${deg})`} d={`M0-1.500H${len - 23}L${len - 26}-7 ${len} 0 ${len - 26} 7 ${len - 23} 1.500H0z`} fill="#fa0a05" stroke="#b01410" strokeWidth="0.500" />
    </g>
  );
}

function Annotations() {
  return (
    <svg viewBox="0 0 1920 1040" className="pointer-events-none absolute inset-0 h-full w-full" aria-hidden="true">
      <Arrow from={[1516, 583]} to={[1293, 616]} />
      <Arrow from={[1763, 414]} to={[1698, 461]} />
      <Arrow from={[1691, 646]} to={[1657, 556]} />
    </svg>
  );
}

function Watermark() {
  return (
    <div className="pointer-events-none absolute right-[11px] bottom-[6px] flex items-end whitespace-nowrap">
      <svg width="46" height="42" viewBox="0 0 46 42" aria-hidden="true">
        <defs>
          <linearGradient id="wmBlue" x1="1" y1="0" x2="0" y2="1"><stop offset="0" stopColor="#6fd0ee" /><stop offset="1" stopColor="#3f6fbe" /></linearGradient>
          <linearGradient id="wmGreen" x1="0" y1="1" x2="1" y2="0"><stop offset="0" stopColor="#e8ea58" /><stop offset="1" stopColor="#3fb573" /></linearGradient>
        </defs>
        <path d="M46 1C28-1 5 8 1 24c-1 6 3 11 7 11C3 26 12 12 26 7c7-3 13-4 20-6z" fill="url(#wmBlue)" />
        <path d="M10 41c15 0 30-8 32-18 1-8-8-10-17-5 7-1 11 1 10 6-2 8-13 14-25 17z" fill="url(#wmGreen)" />
        <path d="M7 26c0-9 10-17 17-15-9 1-14 8-12 13 2 4 9 3 11-1 1-3-2-4-4-3 3-4 8-1 7 4-2 7-9 9-13 8-4 0-6-3-6-6z" fill="url(#wmBlue)" />
      </svg>
      <div className="-ml-1">
        <div className="text-[21px] leading-6 font-medium text-[#5490cf]">极光下载站</div>
        <div className="font-['Liberation_Sans'] text-[17px] leading-5 text-[#4db679]">www.xz7.com</div>
      </div>
    </div>
  );
}

export default function App() {
  return (
    <div className="relative flex h-screen min-w-[1500px] flex-col overflow-hidden bg-[#e5e7e8] bg-[radial-gradient(ellipse_at_79%_4%,#e8eae2_0,transparent_14%),radial-gradient(ellipse_at_60%_98%,#eee9e7_0,transparent_25%),radial-gradient(ellipse_at_45%_96%,#ece8e6_0,transparent_22%),radial-gradient(ellipse_at_20%_96%,#e8e9e4_0,transparent_16%),radial-gradient(ellipse_at_90%_85%,#e8eae0_0,transparent_38%),radial-gradient(ellipse_at_100%_50%,#ece6e3_0,transparent_14%),linear-gradient(to_right,#e1e5e9_0,#e8eaec_32%,#e3e6ea_60%,#e4e6e4_85%,#e0e4e6_100%)] font-['Noto_Sans','Noto_Sans_CJK_SC',sans-serif] leading-4 [&_.text-xs]:leading-4">
      <svg width="0" height="0" className="absolute" aria-hidden="true">
        <defs>
          <linearGradient id="orb" x1="0" y1="0" x2="0" y2="1"><stop offset="0.300" stopColor="#fff" /><stop offset="1" stopColor="#f1f1f5" /></linearGradient>
          <linearGradient id="orbFlip" x1="0" y1="1" x2="0" y2="0"><stop offset="0.300" stopColor="#fff" /><stop offset="1" stopColor="#f6f6f9" /></linearGradient>
        </defs>
      </svg>
      <TitleBar />
      <MenuRow />
      <Ribbon />
      <div className="flex min-h-0 flex-1">
        <SlideList />
        <Canvas />
        <Panel />
        <Rail />
      </div>
      <StatusBar />
      <Annotations />
      <span className="absolute top-[744px] right-[3px] flex h-[58px] w-[7px] flex-col overflow-hidden rounded-full shadow-[0_2px_4px_#00000044]">
        <span className="h-5 bg-[#9b9a96]" />
        <span className="flex-1 bg-gradient-to-b from-[#1fc868] to-[#7df582]" />
      </span>
      <Watermark />
    </div>
  );
}
